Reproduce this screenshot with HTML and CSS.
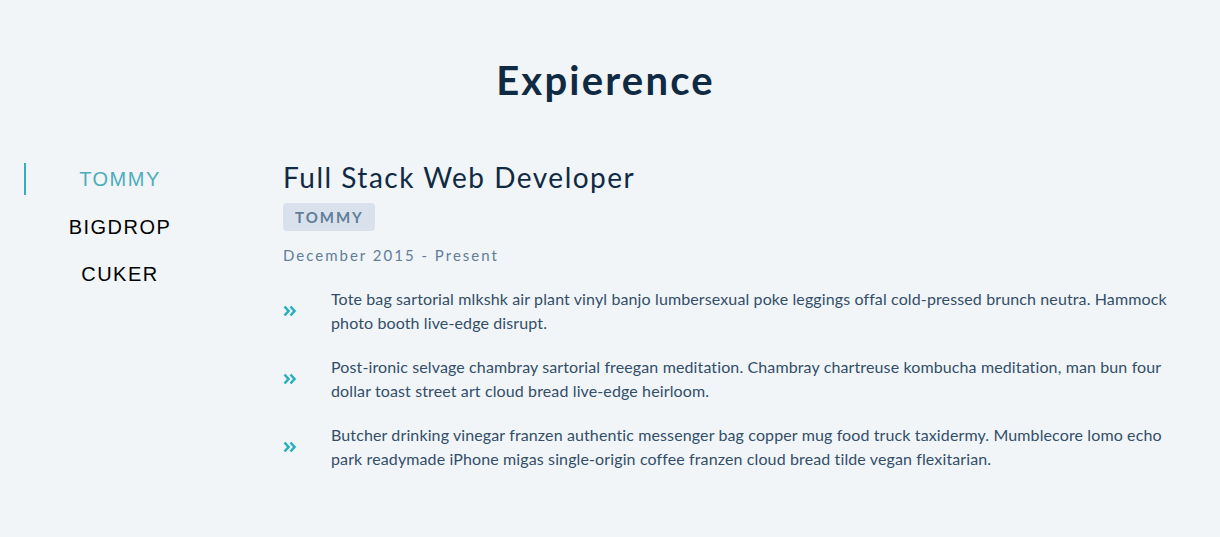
FILE: index.html
```html
<!DOCTYPE html>
<html lang="en">
<head>
<meta charset="utf-8">
<title>Expierence</title>
<link rel="stylesheet" href="styles.css">
</head>
<body>
<section class="section">
  <h2 class="section-title">Expierence</h2>
  <div class="jobs">
    <nav class="tabs">
      <button class="tab active">TOMMY</button>
      <button class="tab">BIGDROP</button>
      <button class="tab">CUKER</button>
    </nav>
    <article class="job">
      <h3 class="job-title">Full Stack Web Developer</h3>
      <span class="company">TOMMY</span>
      <p class="dates">December 2015 - Present</p>
      <ul class="duties">
        <li class="duty">
          <svg class="icon" viewBox="0 0 14 12" width="14" height="12" aria-hidden="true"><path d="M1.5 1.5 L5.5 6 L1.5 10.5 M7.5 1.5 L11.5 6 L7.5 10.5" fill="none" stroke="currentColor" stroke-width="2.6" stroke-linejoin="miter"/></svg>
          <p>Tote bag sartorial mlkshk air plant vinyl banjo lumbersexual poke leggings offal cold-pressed brunch neutra. Hammock photo booth live-edge disrupt.</p>
        </li>
        <li class="duty">
          <svg class="icon" viewBox="0 0 14 12" width="14" height="12" aria-hidden="true"><path d="M1.5 1.5 L5.5 6 L1.5 10.5 M7.5 1.5 L11.5 6 L7.5 10.5" fill="none" stroke="currentColor" stroke-width="2.6" stroke-linejoin="miter"/></svg>
          <p>Post-ironic selvage chambray sartorial freegan meditation. Chambray chartreuse kombucha meditation, man bun four dollar toast street art cloud bread live-edge heirloom.</p>
        </li>
        <li class="duty">
          <svg class="icon" viewBox="0 0 14 12" width="14" height="12" aria-hidden="true"><path d="M1.5 1.5 L5.5 6 L1.5 10.5 M7.5 1.5 L11.5 6 L7.5 10.5" fill="none" stroke="currentColor" stroke-width="2.6" stroke-linejoin="miter"/></svg>
          <p>Butcher drinking vinegar franzen authentic messenger bag copper mug food truck taxidermy. Mumblecore lomo echo park readymade iPhone migas single-origin coffee franzen cloud bread tilde vegan flexitarian.</p>
        </li>
      </ul>
    </article>
  </div>
</section>
</body>
</html>
```
FILE: styles.css
```css
* { box-sizing: border-box; }
html, body { margin: 0; padding: 0; }
body {
  background: #f1f5f8;
  font-family: Lato, "Open Sans", sans-serif;
  color: #102a43;
  width: 1220px;
  height: 537px;
  overflow: hidden;
}
.section {
  padding: 56px 24px 0 24px;
}
.section-title {
  margin: 0;
  padding-right: 9px;
  text-align: center;
  font-size: 40px;
  line-height: 48px;
  font-weight: 700;
  letter-spacing: 2.2px;
  color: #102a43;
}
.jobs {
  margin-top: 58px;
  display: flex;
  gap: 69px;
}
.tabs {
  width: 190px;
  flex: none;
  display: flex;
  flex-direction: column;
  gap: 15.5px;
  padding-top: 1px;
}
.tab {
  background: transparent;
  border: none;
  border-left: 2px solid transparent;
  font-family: "Liberation Sans", Arial, sans-serif;
  font-size: 20px;
  letter-spacing: 1.5px;
  line-height: 32px;
  height: 32px;
  padding: 0;
  color: #000;
  text-align: center;
}
.tab.active {
  border-left-color: #31b0bd;
  color: #4fadbb;
}
.job {
  flex: 1;
  padding-right: 4px;
}
.job-title {
  margin: -2px 0 0 0;
  font-weight: 400;
  font-size: 28px;
  line-height: 34px;
  letter-spacing: 1.5px;
  color: #102a43;
}
.company {
  display: inline-block;
  margin-top: 9px;
  background: #d9e2ec;
  color: #627d98;
  font-weight: 700;
  font-size: 15px;
  letter-spacing: 2px;
  line-height: 28px;
  padding: 0 11px 0 12px;
  border-radius: 4px;
}
.dates {
  margin: 12px 0 0 0;
  font-size: 15px;
  line-height: 24px;
  letter-spacing: 2px;
  color: #627d98;
}
.duties {
  list-style: none;
  margin: 20px 0 0 0;
  padding: 0;
  display: flex;
  flex-direction: column;
  gap: 20px;
}
.duty {
  display: flex;
  align-items: center;
  gap: 34px;
}
.icon {
  flex: none;
  color: #2bb0bd;
}
.duty p {
  margin: 0;
  font-size: 16px;
  line-height: 24px;
  letter-spacing: 0.12px;
  color: #334e68;
}
```
